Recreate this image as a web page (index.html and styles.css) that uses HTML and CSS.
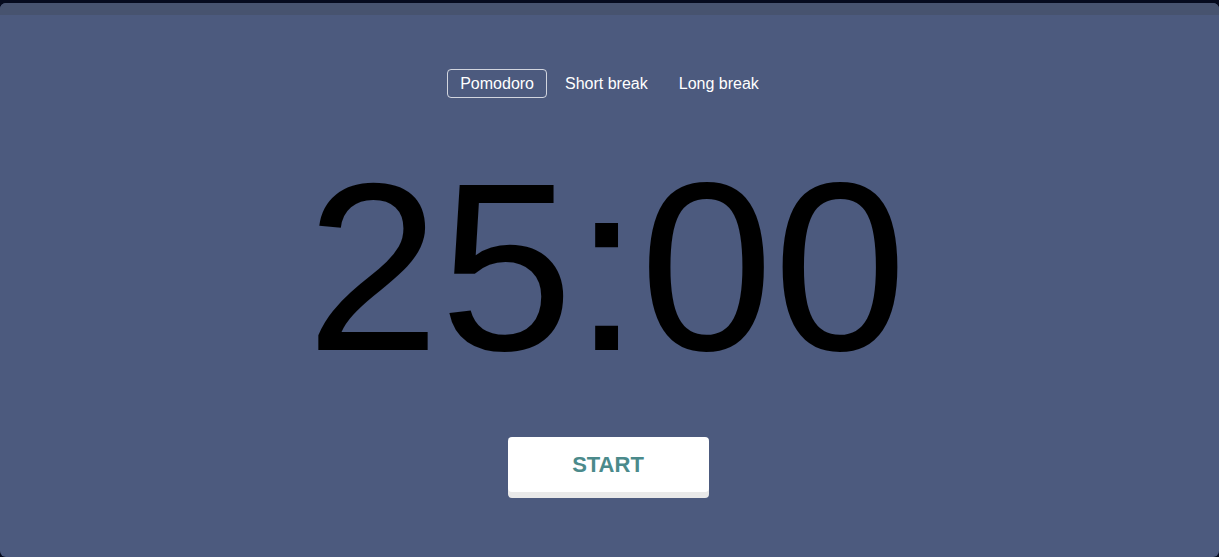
FILE: index.html
```html
<!DOCTYPE html>
<html lang="en">
<head>
<meta charset="utf-8">
<title>Pomodoro</title>
<link rel="stylesheet" href="styles.css">
</head>
<body>
  <div class="app">
    <div class="app-header"></div>
    <main class="timer-panel">
      <nav class="tabs">
        <button class="tab active">Pomodoro</button>
        <button class="tab">Short break</button>
        <button class="tab">Long break</button>
      </nav>
      <div class="time">25:00</div>
      <button class="start">START</button>
    </main>
  </div>
</body>
</html>
```

FILE: styles.css
```css
html, body {
  margin: 0;
  padding: 0;
  height: 100%;
}

body {
  background: #060b1e;
  font-family: "Liberation Sans", Arial, sans-serif;
  padding-top: 3px;
  box-sizing: border-box;
}

.app {
  height: 554px;
  background: #4c5a7e;
  border-radius: 6px;
  overflow: hidden;
  display: flex;
  flex-direction: column;
}

.app-header {
  height: 12px;
  background: #47536f;
  flex: none;
}

.timer-panel {
  display: flex;
  flex-direction: column;
  align-items: center;
  padding-top: 54px;
}

.tabs {
  display: flex;
  gap: 5px;
}

.tab {
  font-family: "Liberation Sans", Arial, sans-serif;
  font-size: 16px;
  line-height: 17px;
  color: #ffffff;
  background: transparent;
  border: 1px solid transparent;
  border-radius: 4px;
  padding: 5px 12px;
  margin: 0;
  cursor: pointer;
}

.tab.active {
  border-color: rgba(255, 255, 255, 0.75);
}

.time {
  margin-top: 49px;
  margin-bottom: 2px;
  padding-right: 6px;
  font-size: 240px;
  line-height: 240px;
  height: 240px;
  color: #000000;
}

.start {
  margin-top: 48px;
  margin-right: 3px;
  width: 201px;
  height: 55px;
  border: none;
  border-radius: 4px;
  background: #ffffff;
  box-shadow: 0 6px 0 #e9e9e9;
  font-family: "Liberation Sans", Arial, sans-serif;
  font-size: 22px;
  font-weight: bold;
  color: #4b8a8b;
  cursor: pointer;
  padding: 0;
}
```
